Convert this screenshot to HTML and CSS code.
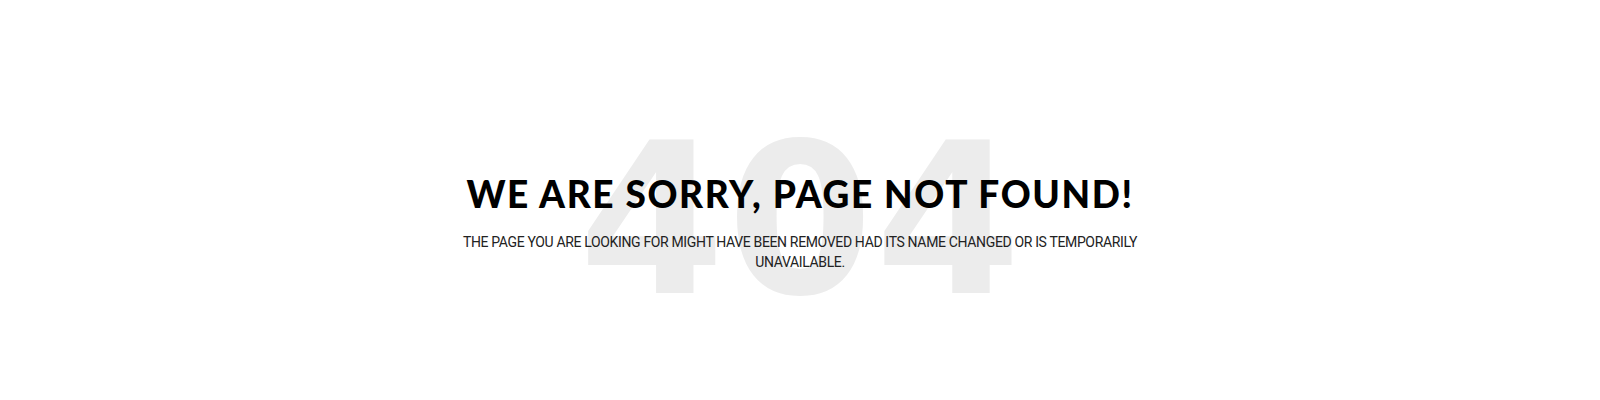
FILE: index.html
```html
<!DOCTYPE html>
<html>
<head>
    <meta charset='utf-8'>
    <title>404 - Page Not Found</title>
    <meta name='viewport' content='width=device-width, initial-scale=1'>
    <link rel="stylesheet" href="styles.css">
</head>
<body>
    <div class="notfound">
        <div class="notfound-404">404</div>
        <div class="notfound-text">
            <h2>We are sorry, Page not found!</h2>
            <p>The page you are looking for might have been removed had its name changed or is temporarily unavailable.</p>
        </div>
    </div>
</body>
</html>
```

FILE: styles.css
```css
*{
    margin: 0px;
    padding: 0px;
    box-sizing: border-box;
}
body{
    height: 400px;
    display: flex;
    justify-content: center;
    padding-top: 109px;
    background: #fff;
}
.notfound{
    display: grid;
    width: 720px;
    height: 224px;
    text-align: center;
}
.notfound-404{
    grid-area: 1 / 1;
    align-self: start;
    margin-top: 7px;
    font-family: "DejaVu Sans", Roboto, sans-serif;
    font-size: 210px;
    font-weight: 700;
    line-height: 1;
    color: #ececec;
    letter-spacing: 2px;
    padding-left: 2px;
}
.notfound-text{
    grid-area: 1 / 1;
    align-self: start;
    margin-top: 63px;
}
h2{
    font-family: Lato, "Noto Sans", sans-serif;
    font-size: 37px;
    font-weight: 900;
    color: #000;
    text-transform: uppercase;
    letter-spacing: 1.6px;
    line-height: 1.2;
}
p{
    margin-top: 16px;
    font-family: Roboto, "Liberation Sans", sans-serif;
    font-size: 14px;
    font-weight: 400;
    color: #222;
    text-transform: uppercase;
    letter-spacing: -0.35px;
    line-height: 20px;
}
```
